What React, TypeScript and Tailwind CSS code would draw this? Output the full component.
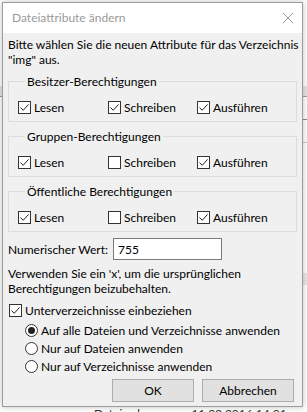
import React from 'react';

const font = { fontFamily: 'Lato, "Noto Sans", Arial, sans-serif' };

const Check = ({ checked }: { checked: boolean }) => (
  <span className="w-[13px] h-[13px] border border-[#333333] bg-white flex items-center justify-center shrink-0">
    {checked && (
      <svg width="11" height="11" viewBox="0 0 11 11">
        <path d="M1.5 5.5 L4.2 8.3 L9.6 2.4" fill="none" stroke="#222222" strokeWidth="1" />
      </svg>
    )}
  </span>
);

const Radio = ({ selected }: { selected: boolean }) => (
  <span className="w-[13px] h-[13px] rounded-full border border-[#333333] bg-white flex items-center justify-center shrink-0">
    {selected && <span className="w-[7px] h-[7px] rounded-full bg-[#222222]" />}
  </span>
);

const CheckItem = ({ label, checked, width }: { label: string; checked: boolean; width: string }) => (
  <div className={`flex items-center gap-[3px] ${width}`}>
    <Check checked={checked} />
    <span>{label}</span>
  </div>
);

const PermGroup = ({ title, values }: { title: string; values: boolean[] }) => (
  <fieldset className="border border-[#dcdcdc] pl-[9px] pt-[10px] pb-[6px] min-w-0">
    <legend className="ml-[7px] px-[2px] leading-[15px]">{title}</legend>
    <div className="flex h-[16px] items-center">
      <CheckItem label="Lesen" checked={values[0]} width="w-[90px]" />
      <CheckItem label="Schreiben" checked={values[1]} width="w-[89px]" />
      <CheckItem label="Ausführen" checked={values[2]} width="w-[80px]" />
    </div>
  </fieldset>
);

const App = () => {
  const groups = [
    { title: 'Besitzer-Berechtigungen', values: [true, true, true] },
    { title: 'Gruppen-Berechtigungen', values: [true, false, true] },
    { title: 'Öffentliche Berechtigungen', values: [true, false, true] },
  ];

  const scopes = [
    'Auf alle Dateien und Verzeichnisse anwenden',
    'Nur auf Dateien anwenden',
    'Nur auf Verzeichnisse anwenden',
  ];

  return (
    <div
      className="w-[307px] h-[412px] relative overflow-hidden bg-white text-[12px] text-black pt-[2px] pl-[2px] whitespace-nowrap"
      style={font}
    >
      {/* window behind the dialog */}
      <div className="absolute left-0 right-0 top-[86px] h-[11px] bg-[#e4e4e4] border-b border-[#a0a0a0]" />
      <div className="absolute right-0 top-[119px] w-[6px] h-px bg-[#8a8a8a]" />
      <div className="absolute right-0 top-[142px] w-[6px] h-px bg-[#c8c8c8]" />
      <div className="absolute right-0 top-[273px] w-[6px] h-[12px] bg-[#e8e8e8]" />
      <div className="absolute left-0 top-[406px] flex gap-[34px] pl-[94px] text-[#333333] leading-[15px]">
        <span>Dateiordner</span>
        <span>11.03.2016 14:01</span>
        <span>drwxr</span>
      </div>

      {/* dialog */}
      <div className="relative w-[301px] h-[405px] border border-[#9c9c9c] bg-[#f0f0f0] shadow-[0_0_6px_rgba(0,0,0,0.25)] flex flex-col">
        <div className="h-[30px] bg-white flex items-center justify-between pl-[9px] pr-[7px]">
          <span className="text-[#9a9a9a]">Dateiattribute ändern</span>
          <svg width="12" height="12" viewBox="0 0 12 12" className="mr-[1px]">
            <path d="M1 1 L11 11 M11 1 L1 11" stroke="#9a9a9a" strokeWidth="1" />
          </svg>
        </div>

        <div className="px-[5px] pt-[4px] flex flex-col leading-[15px]">
          <p>
            Bitte wählen Sie die neuen Attribute für das Verzeichnis
            <br />
            "img" aus.
          </p>

          <div className="mt-[7px] flex flex-col gap-[7px]">
            {groups.map((g) => (
              <PermGroup key={g.title} title={g.title} values={g.values} />
            ))}
          </div>

          <div className="mt-[6px] flex items-center">
            <span className="w-[105px]">Numerischer Wert:</span>
            <div className="w-[109px] h-[22px] border border-[#7a7a7a] bg-white flex items-center pl-[4px]">
              755
            </div>
          </div>

          <p className="mt-[6px]">
            Verwenden Sie ein 'x', um die ursprünglichen
            <br />
            Berechtigungen beizubehalten.
          </p>

          <div className="mt-[7px] ml-[1px] h-[15px] flex items-center gap-[3px]">
            <Check checked />
            <span>Unterverzeichnisse einbeziehen</span>
          </div>

          <div className="mt-[3px] ml-[17px] flex flex-col">
            {scopes.map((s, i) => (
              <div key={s} className="h-[18px] flex items-center gap-[3px]">
                <Radio selected={i === 0} />
                <span>{s}</span>
              </div>
            ))}
          </div>

          <div className="mt-[4px] mr-[3px] flex justify-end gap-[8px]">
            <button className="w-[82px] h-[23px] bg-[#e1e1e1] border border-[#adadad]">OK</button>
            <button className="w-[92px] h-[23px] bg-[#e1e1e1] border border-[#adadad]">Abbrechen</button>
          </div>
        </div>
      </div>
    </div>
  );
};

export default App;
